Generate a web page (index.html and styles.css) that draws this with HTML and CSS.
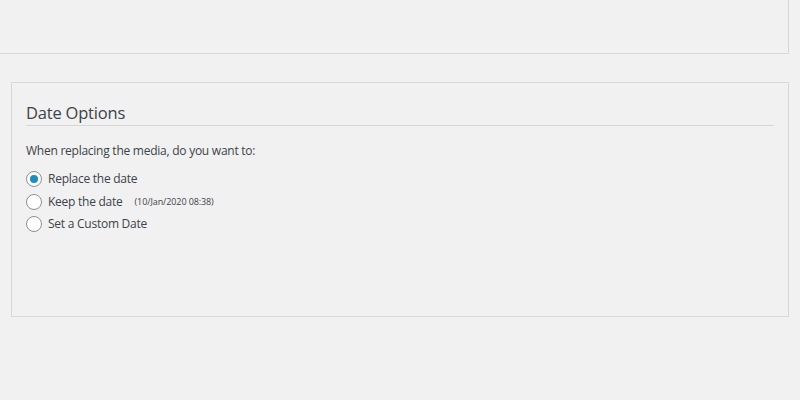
FILE: index.html
```html
<!DOCTYPE html>
<html lang="en">
<head>
<meta charset="utf-8">
<title>Date Options</title>
<link rel="stylesheet" href="styles.css">
</head>
<body>
<div class="page">
  <div class="prev-box"></div>
  <section class="option-box">
    <h3 class="box-title">Date Options</h3>
    <p class="intro">When replacing the media, do you want to:</p>
    <ul class="options">
      <li class="option">
        <span class="radio checked"></span>
        <span class="label">Replace the date</span>
      </li>
      <li class="option">
        <span class="radio"></span>
        <span class="label">Keep the date</span>
        <span class="small">(10/Jan/2020 08:38)</span>
      </li>
      <li class="option">
        <span class="radio"></span>
        <span class="label">Set a Custom Date</span>
      </li>
    </ul>
  </section>
</div>
</body>
</html>
```

FILE: styles.css
```css
html, body {
  margin: 0;
  padding: 0;
  background: #f1f1f1;
}

body {
  font-family: "Open Sans", "Noto Sans", sans-serif;
  color: #3c434a;
  font-size: 12px;
  letter-spacing: -0.25px;
}

.page {
  width: 800px;
  height: 400px;
  overflow: hidden;
}

.prev-box {
  height: 53px;
  margin-right: 11px;
  border-right: 1px solid #d8d8d8;
  border-bottom: 1px solid #d8d8d8;
}

.option-box {
  margin: 28px 11px 0 11px;
  height: 233px;
  border: 1px solid #d8d8d8;
  padding: 0 14px;
}

.box-title {
  margin: 0;
  padding-top: 19px;
  font-size: 16.5px;
  font-weight: 400;
  line-height: 22px;
  color: #3c434a;
  letter-spacing: -0.2px;
  padding-bottom: 1px;
  border-bottom: 1px solid #d6d6d6;
}

.intro {
  margin: 16px 0 0 0;
  line-height: 18px;
}

.options {
  list-style: none;
  margin: 8px 0 0 0;
  padding: 0;
}

.option {
  display: flex;
  align-items: center;
  height: 22.5px;
}

.radio {
  width: 14px;
  height: 14px;
  border: 1px solid #8c8f94;
  border-radius: 50%;
  background: #ffffff;
  box-sizing: content-box;
  display: flex;
  align-items: center;
  justify-content: center;
  margin-right: 6px;
  flex: none;
}

.radio.checked::after {
  content: "";
  width: 8px;
  height: 8px;
  border-radius: 50%;
  background: #1e8cbe;
}

.label {
  line-height: 18px;
}

.small {
  font-size: 9px;
  letter-spacing: -0.1px;
  margin-left: 12px;
}
```
